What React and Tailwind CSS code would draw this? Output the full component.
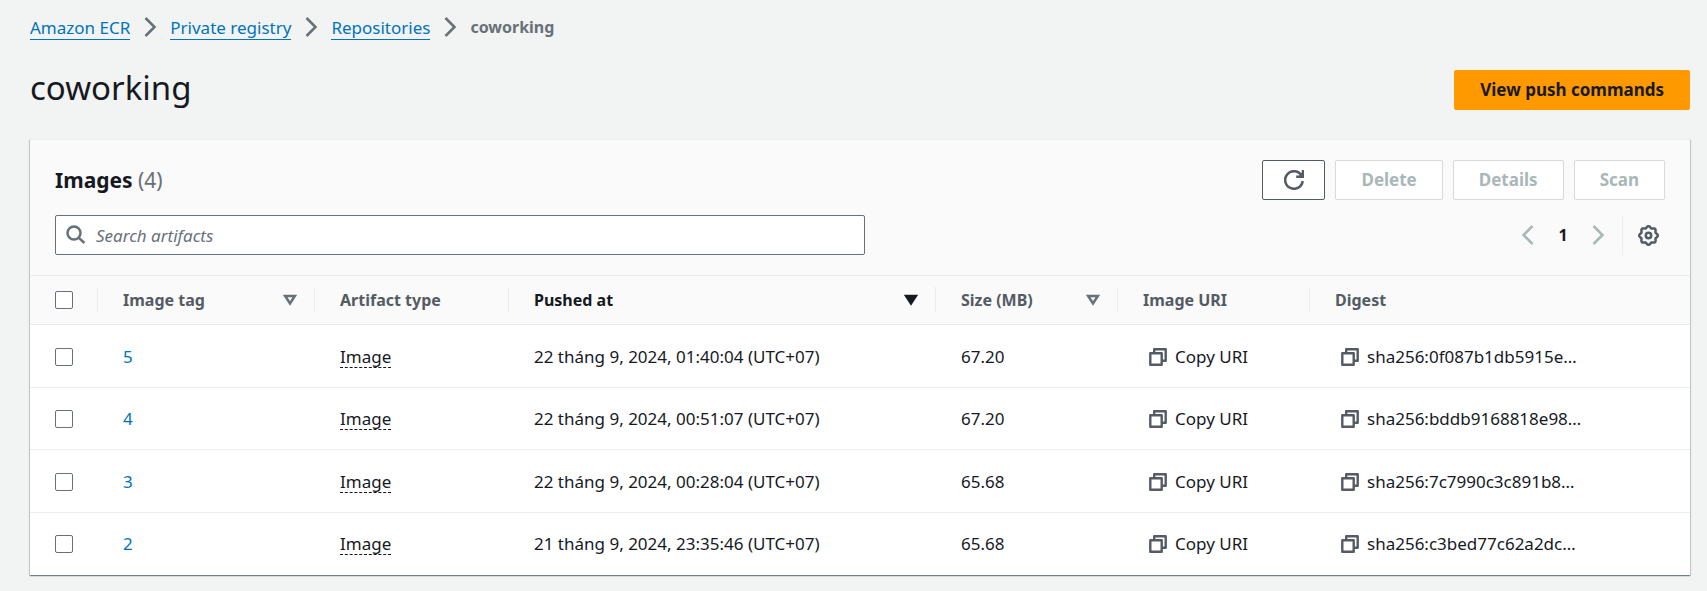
import React from "react";

const rows = [
  { tag: "5", pushed: "22 tháng 9, 2024, 01:40:04 (UTC+07)", size: "67.20", digest: "sha256:0f087b1db5915e…" },
  { tag: "4", pushed: "22 tháng 9, 2024, 00:51:07 (UTC+07)", size: "67.20", digest: "sha256:bddb9168818e98…" },
  { tag: "3", pushed: "22 tháng 9, 2024, 00:28:04 (UTC+07)", size: "65.68", digest: "sha256:7c7990c3c891b8…" },
  { tag: "2", pushed: "21 tháng 9, 2024, 23:35:46 (UTC+07)", size: "65.68", digest: "sha256:c3bed77c62a2dc…" },
];

const crumbs = ["Amazon ECR", "Private registry", "Repositories"];

// Outline of the gear: a circle whose radius swells once per tooth.
const gearPath = (() => {
  const points = [];
  for (let i = 0; i < 96; i += 1) {
    const a = (i / 96) * Math.PI * 2;
    const r = 8.5 + 0.85 * Math.cos(8 * a);
    points.push(`${(10.5 + r * Math.cos(a)).toFixed(2)} ${(10.5 + r * Math.sin(a)).toFixed(2)}`);
  }
  return `M${points.join("L")}Z`;
})();

function Chevron({ left = false, className = "" }) {
  return (
    <svg viewBox="0 0 20 20" className={`h-5 w-5 ${className}`} fill="none" stroke="currentColor" strokeWidth="2.5" aria-hidden="true">
      <path d={left ? "M14.5 1 5.5 10l9 9" : "M5.5 1l9 9-9 9"} />
    </svg>
  );
}

function CopyIcon() {
  return (
    <svg viewBox="0 0 18 18" className="h-[18px] w-[18px] shrink-0 text-[#545b64]" fill="none" stroke="currentColor" strokeWidth="2.4" strokeLinejoin="round" aria-hidden="true">
      <path d="M1.3 5.2h11.4v11.5H1.3z" />
      <path d="M5.2 5V1.3h11.5v11.4H13" />
    </svg>
  );
}

function SortIcon({ active = false }) {
  return (
    <svg viewBox="0 0 14 12" className={`h-3 w-3.5 shrink-0 ${active ? "text-[#16191f]" : "text-[#687078]"}`} fill={active ? "currentColor" : "none"} stroke="currentColor" strokeWidth="2.5" aria-hidden="true">
      <path d="M2.2 2h9.6L7 9.4z" />
    </svg>
  );
}

function Checkbox({ label }) {
  return (
    <input
      type="checkbox"
      aria-label={label}
      className="block h-[18px] w-[18px] appearance-none rounded-xs border border-[#687078] bg-white checked:bg-[#0073bb]"
    />
  );
}

function HeaderCell({ children, sort, active = false, last = false, width = "" }) {
  return (
    <th scope="col" className={`p-0 text-left text-base font-bold ${width} ${active ? "text-[#16191f]" : "text-[#545b64]"}`}>
      <div className={`flex h-[25px] items-center justify-between pr-[17px] pl-[25px] whitespace-nowrap ${last ? "" : "border-r border-[#eaeded]"}`}>
        {sort ? (
          <button type="button" className="flex flex-1 items-center justify-between">
            <span>{children}</span>
            <SortIcon active={active} />
          </button>
        ) : (
          <span>{children}</span>
        )}
      </div>
    </th>
  );
}

function DisabledButton({ children }) {
  return (
    <button type="button" disabled className="h-10 rounded-xs border border-[#d5dbdb] bg-white px-[25px] font-bold text-[#aab7b8]">
      {children}
    </button>
  );
}

export default function App() {
  return (
    <main className="min-h-screen bg-[#f2f3f3] pt-3.5 pr-[17px] pb-[15px] pl-[30px] font-['Noto_Sans',sans-serif] text-[17px] leading-[26px] text-[#16191f]">
      <nav aria-label="Breadcrumbs">
        <ol className="flex h-[26px] items-center">
          {crumbs.map((c) => (
            <li key={c} className="flex items-center">
              <a href="#" className="border-b border-[#0073bb] pt-0.5 leading-[22px] text-[#0073bb]">{c}</a>
              <Chevron className="mx-2.5 text-[#687078]" />
            </li>
          ))}
          <li className="text-base leading-6 font-bold text-[#687078]" aria-current="page">coworking</li>
        </ol>
      </nav>

      <header className="mt-[23px] flex items-center justify-between">
        <h1 className="text-[33px] leading-[50px]">coworking</h1>
        <button type="button" className="mt-1 h-10 rounded-xs bg-[#ff9900] px-[26px] font-bold text-[#16191f]">
          View push commands
        </button>
      </header>

      <section className="mt-[26px] border-t border-[#eaeded] bg-white pb-px shadow-[0_1px_1px_0_rgba(0,28,36,0.35),1px_1px_1px_0_rgba(0,28,36,0.15),-1px_1px_1px_0_rgba(0,28,36,0.15)]">
        <div className="border-b border-[#eaeded] bg-[#fafafa] px-[25px] pt-5 pb-5">
          <div className="flex items-center justify-between">
            <h2 className="text-[21px] leading-7 font-bold">
              Images <span className="font-normal text-[#687078]">(4)</span>
            </h2>
            <div className="flex gap-2.5">
              <button type="button" aria-label="Refresh" className="flex h-10 w-[63px] items-center justify-center rounded-xs border border-[#545b64] bg-white text-[#545b64]">
                <svg viewBox="0 0 20 20" className="h-5 w-5" fill="none" stroke="currentColor" strokeWidth="2.5" aria-hidden="true">
                  <path d="M18.7 11A8.8 8.8 0 1 1 17.6 5.6" />
                  <path d="M19 0v6.8h-6.8" />
                  <path d="M14.5 5.6 18 2.5v3.1z" fill="currentColor" stroke="none" />
                </svg>
              </button>
              <DisabledButton>Delete</DisabledButton>
              <DisabledButton>Details</DisabledButton>
              <DisabledButton>Scan</DisabledButton>
            </div>
          </div>

          <div className="mt-[15px] flex items-center justify-between">
            <label className="flex h-10 w-[calc(50%+5px)] items-center gap-2.5 rounded-xs border border-[#687078] bg-white px-2.5">
              <svg viewBox="0 0 20 20" className="h-5 w-5 shrink-0 text-[#687078]" fill="none" stroke="currentColor" strokeWidth="2.5" aria-hidden="true">
                <circle cx="8" cy="8" r="6.5" />
                <path d="m12.6 12.6 5.8 5.4" />
              </svg>
              <input type="search" aria-label="Search artifacts" placeholder="Search artifacts" className="min-w-0 flex-1 bg-transparent pt-0.5 outline-none placeholder:text-[#687078] placeholder:italic" />
            </label>
            <div className="flex items-center">
              <button type="button" aria-label="Previous page" disabled className="text-[#aab7b8]">
                <Chevron left />
              </button>
              <button type="button" aria-current="page" className="w-[50px] text-center text-base font-bold">1</button>
              <button type="button" aria-label="Next page" disabled className="text-[#aab7b8]">
                <Chevron />
              </button>
              <span className="mr-[15px] ml-3.5 h-10 w-px bg-[#eaeded]" />
              <button type="button" aria-label="Preferences" className="mr-1.5 text-[#545b64]">
                <svg viewBox="0 0 21 21" className="h-[21px] w-[21px]" fill="none" stroke="currentColor" strokeWidth="2.5" strokeLinejoin="round" aria-hidden="true">
                  <path d={gearPath} />
                  <circle cx="10.5" cy="10.5" r="2.7" />
                </svg>
              </button>
            </div>
          </div>
        </div>

        <table className="w-full table-fixed border-collapse">
          <thead>
            <tr className="h-12 border-b border-[#eaeded] bg-[#fafafa]">
              <th scope="col" className="w-[68px] p-0">
                <div className="flex h-[25px] items-center border-r border-[#eaeded] pl-[25px]">
                  <Checkbox label="Select all images" />
                </div>
              </th>
              <HeaderCell sort width="w-[217px]">Image tag</HeaderCell>
              <HeaderCell width="w-[194px]">Artifact type</HeaderCell>
              <HeaderCell sort active width="w-[427px]">Pushed at</HeaderCell>
              <HeaderCell sort width="w-[182px]">Size (MB)</HeaderCell>
              <HeaderCell width="w-[192px]">Image URI</HeaderCell>
              <HeaderCell last>Digest</HeaderCell>
            </tr>
          </thead>
          <tbody>
            {rows.map((r) => (
              <tr key={r.tag} className="border-b border-[#eaeded] last:border-0 odd:h-[63px] even:h-[62px] [&>td]:pt-0.5">
                <td className="pl-[25px]"><Checkbox label={`Select image ${r.tag}`} /></td>
                <td className="pl-[25px]"><a href="#" className="text-[#0073bb]">{r.tag}</a></td>
                <td className="pl-[25px]"><span className="inline-block border-b border-dashed border-[#16191f] leading-5">Image</span></td>
                <td className="pl-[25px] whitespace-nowrap">{r.pushed}</td>
                <td className="pl-[25px]">{r.size}</td>
                <td className="pl-[31px]">
                  <button type="button" className="flex items-center gap-2 whitespace-nowrap"><CopyIcon />Copy URI</button>
                </td>
                <td className="pl-[31px]">
                  <button type="button" className="flex items-center gap-2 whitespace-nowrap"><CopyIcon />{r.digest}</button>
                </td>
              </tr>
            ))}
          </tbody>
        </table>
      </section>
    </main>
  );
}
